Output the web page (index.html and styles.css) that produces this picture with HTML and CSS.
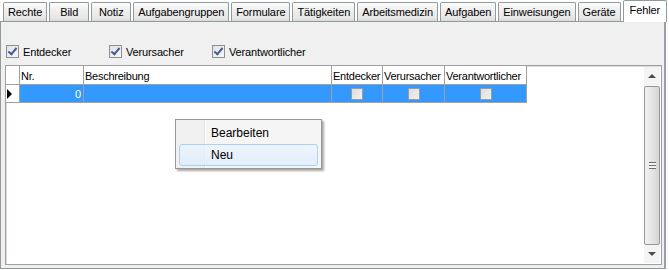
FILE: index.html
```html
<!DOCTYPE html>
<html lang="de">

<head>
    <meta charset="UTF-8" />
    <title>Fehler</title>
    <link rel="stylesheet" href="styles.css">
</head>

<body>
    <div class="tabs">
        <div class="tab">Rechte</div>
        <div class="tab">Bild</div>
        <div class="tab">Notiz</div>
        <div class="tab">Aufgabengruppen</div>
        <div class="tab">Formulare</div>
        <div class="tab">Tätigkeiten</div>
        <div class="tab">Arbeitsmedizin</div>
        <div class="tab">Aufgaben</div>
        <div class="tab">Einweisungen</div>
        <div class="tab">Geräte</div>
        <div class="tab active">Fehler</div>
    </div>

    <div class="panel">
        <div class="filters">
            <label class="check"><span class="box checked"></span>Entdecker</label>
            <label class="check"><span class="box checked"></span>Verursacher</label>
            <label class="check"><span class="box checked"></span>Verantwortlicher</label>
        </div>

        <div class="grid">
            <div class="grid-body">
                <div class="row head">
                    <div class="cell ind"></div>
                    <div class="cell nr">Nr.</div>
                    <div class="cell desc">Beschreibung</div>
                    <div class="cell c1">Entdecker</div>
                    <div class="cell c2">Verursacher</div>
                    <div class="cell c3">Verantwortlicher</div>
                </div>
                <div class="row selected">
                    <div class="cell ind"><span class="arrow"></span></div>
                    <div class="cell nr num">0</div>
                    <div class="cell desc"></div>
                    <div class="cell c1"><span class="mini"></span></div>
                    <div class="cell c2"><span class="mini"></span></div>
                    <div class="cell c3"><span class="mini"></span></div>
                </div>
            </div>

            <!-- vertikale Scrollbar -->
            <div class="scrollbar">
                <div class="sb-btn"><span class="tri up"></span></div>
                <div class="thumb"><span class="grip"></span></div>
                <div class="sb-btn"><span class="tri down"></span></div>
            </div>
        </div>
    </div>

    <div class="menu">
        <div class="menu-item">Bearbeiten</div>
        <div class="menu-item hover">Neu</div>
    </div>
</body>

</html>
```

FILE: styles.css
```css
body {
    margin: 0;
    width: 669px;
    height: 270px;
    background: #ffffff;
    font-family: "Liberation Sans", Arial, sans-serif;
    font-size: 11px;
    letter-spacing: -0.15px;
    color: #000;
    position: relative;
    overflow: hidden;
}

.tabs {
    display: flex;
    align-items: flex-end;
    gap: 2px;
    height: 21px;
    padding-left: 3px;
}

.tab {
    height: 19px;
    min-width: 40px;
    box-sizing: border-box;
    padding: 0 4px;
    border: 1px solid #919b9c;
    border-bottom: none;
    border-radius: 2px 2px 0 0;
    background: linear-gradient(#fcfcfc, #efefef 40%, #e6e6e6 85%, #d8d8d8);
    line-height: 19px;
    letter-spacing: -0.1px;
    text-align: center;
    white-space: nowrap;
}

.tab.active {
    height: 22px;
    margin-bottom: -1px;
    padding: 0 6px;
    background: #ffffff;
    line-height: 18px;
    position: relative;
    z-index: 1;
}

.panel {
    width: 666px;
    height: 248px;
    box-sizing: border-box;
    border: 1px solid #919b9c;
    border-right: 2px solid #9a9fa6;
    background: #f0f0f0;
    padding: 0 2px 3px 4px;
    display: flex;
    flex-direction: column;
}

.filters {
    height: 43px;
    box-sizing: border-box;
    padding: 23px 0 0 1px;
    display: flex;
    align-items: flex-start;
}

.check {
    flex: 0 0 103px;
    display: flex;
    align-items: center;
    gap: 4px;
    height: 13px;
}

.box {
    width: 13px;
    height: 13px;
    box-sizing: border-box;
    border: 1px solid #8e8f8f;
    background: linear-gradient(135deg, #dfe3ea, #f4f6f8);
    position: relative;
}

.box.checked::after {
    content: "";
    position: absolute;
    left: 3px;
    top: 0px;
    width: 3px;
    height: 7px;
    border: solid #4a5b8c;
    border-width: 0 2px 2px 0;
    transform: rotate(40deg);
}

.grid {
    flex: 1;
    display: flex;
    background: #ffffff;
    border: 1px solid #a0a0a0;
    box-shadow: inset 1px 1px 0 #dcdcdc;
}

.grid-body {
    flex: 1;
}

.row {
    display: flex;
}

.row.head {
    height: 19px;
}

.row.selected {
    height: 18px;
}

.cell {
    box-sizing: border-box;
    border-right: 1px solid #a0a0a0;
    border-bottom: 1px solid #a0a0a0;
    padding: 0 2px;
    white-space: nowrap;
    overflow: hidden;
    display: flex;
    align-items: center;
}

.head .cell {
    background: #ffffff;
    padding: 2px 1px 0;
    letter-spacing: -0.25px;
}

.ind {
    width: 14px;
    background: #ffffff;
    padding: 0;
}

.nr {
    width: 64px;
}

.desc {
    width: 248px;
}

.c1 {
    width: 51px;
}

.c2 {
    width: 62px;
}

.c3 {
    width: 82px;
}

.selected .cell {
    background: #3399ff;
    justify-content: center;
}

.selected .ind {
    background: #ffffff;
    justify-content: flex-start;
    padding-left: 1px;
}

.selected .num {
    justify-content: flex-end;
    color: #ffffff;
}

.arrow {
    width: 0;
    height: 0;
    border-top: 5px solid transparent;
    border-bottom: 5px solid transparent;
    border-left: 5px solid #000;
}

.mini {
    width: 12px;
    height: 12px;
    box-sizing: border-box;
    border: 1px solid #9c9c9c;
    background: linear-gradient(135deg, #dcdcdc, #f2f2f2);
}

.scrollbar {
    width: 16px;
    margin: 1px 1px 1px 0;
    display: flex;
    flex-direction: column;
    background: #f6f6f6;
}

.sb-btn {
    height: 18px;
    display: flex;
    align-items: center;
    justify-content: center;
    background: #f4f4f4;
}

.tri {
    width: 0;
    height: 0;
    border-left: 4px solid transparent;
    border-right: 4px solid transparent;
}

.tri.up {
    border-bottom: 4px solid #4d4d4d;
}

.tri.down {
    border-top: 4px solid #4d4d4d;
}

.thumb {
    flex: 1;
    margin-top: 1px;
    border: 1px solid #979797;
    border-radius: 2px;
    background: linear-gradient(90deg, #f2f2f2, #e6e6e6 45%, #d6d6d6);
    display: flex;
    align-items: center;
    justify-content: center;
}

.grip {
    width: 7px;
    height: 7px;
    background: repeating-linear-gradient(#6d6d6d 0 1px, #f4f4f4 1px 3px);
}

.menu {
    position: absolute;
    left: 175px;
    top: 119px;
    width: 147px;
    height: 50px;
    box-sizing: border-box;
    border: 1px solid #979797;
    background: linear-gradient(90deg, #f1f1f1 28px, #e2e3e3 28px 29px, #ffffff 29px 30px, #f5f5f5 30px);
    box-shadow: 2px 2px 2px rgba(0, 0, 0, 0.35);
    padding: 2px 3px;
    font-size: 12px;
    letter-spacing: 0;
    z-index: 5;
}

.menu-item {
    height: 22px;
    box-sizing: border-box;
    padding-left: 31px;
    line-height: 21px;
    border: 1px solid transparent;
    border-radius: 3px;
}

.menu-item.hover {
    border-color: #a8d2f0;
    background: linear-gradient(rgba(235, 244, 253, 0.75), rgba(220, 236, 252, 0.75));
}
```
